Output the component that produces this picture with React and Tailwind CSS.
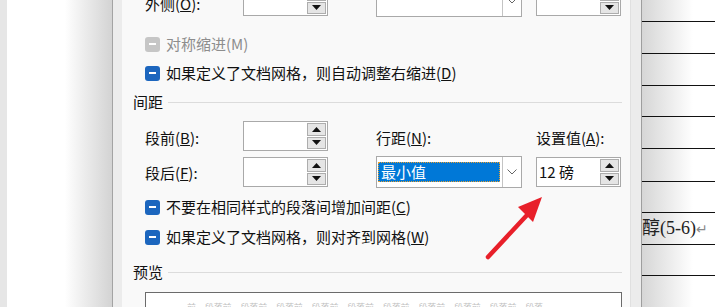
import React from 'react';

const Arrow = ({ up }) => (
  <svg width="9" height="5" viewBox="0 0 9 5">
    {up ? <polygon points="0,5 9,5 4.5,0" fill="#111" /> : <polygon points="0,0 9,0 4.5,5" fill="#111" />}
  </svg>
);

const SpinBox = ({ value, className = '' }) => (
  <div className={`flex h-[30px] w-[85px] border border-[#a9a9a9] bg-white ${className}`}>
    <div className="flex flex-1 items-center pl-[2px] text-[15px] leading-[20px] text-[#111]">{value}</div>
    <div className="flex w-[20px] flex-col gap-[1px] py-[1px] pr-[1px]">
      <div className="flex flex-1 items-center justify-center border border-[#adadad] bg-[#e5e5e5]">
        <Arrow up />
      </div>
      <div className="flex flex-1 items-center justify-center border border-[#adadad] bg-[#e5e5e5]">
        <Arrow />
      </div>
    </div>
  </div>
);

const Chevron = () => (
  <svg width="10" height="6" viewBox="0 0 10 6">
    <polyline points="0.5,0.5 5,5 9.5,0.5" fill="none" stroke="#666" strokeWidth="1" />
  </svg>
);

const Combo = ({ selected, className = '' }) => (
  <div className={`flex w-[146px] border border-[#a9a9a9] bg-white ${className}`}>
    <div className="flex flex-1 items-center pl-[1px] pr-[2px]">
      {selected && (
        <div className="flex h-[20px] flex-1 items-center border border-dotted border-[#e8a030] bg-[#0078d7] pl-[2px] text-[15px] leading-[20px] text-white">
          {selected}
        </div>
      )}
    </div>
    <div className="flex w-[19px] items-center justify-center border-l border-[#c4c4c4] bg-white">
      <Chevron />
    </div>
  </div>
);

const Check = ({ disabled, children }) => (
  <div className="flex h-[20px] items-center pl-[23px]">
    <div
      className={`flex h-[15px] w-[15px] items-center justify-center rounded-[3px] ${
        disabled ? 'bg-[#c6c6c6]' : 'bg-[#1c66be]'
      }`}
    >
      <div className="h-[2px] w-[7px] bg-white" />
    </div>
    <span className={`ml-[6px] text-[15px] leading-[20px] ${disabled ? 'text-[#8d8d8d]' : 'text-[#111]'}`}>
      {children}
    </span>
  </div>
);

const Group = ({ title, className = '' }) => (
  <div className={`flex h-[20px] items-center pl-[11px] pr-[8px] ${className}`}>
    <span className="text-[15px] leading-[20px] text-[#111]">{title}</span>
    <div className="ml-[5px] h-[1px] flex-1 bg-[#dcdcdc]" />
  </div>
);

const docRows = [33, 32, 32, 32, 33, 32, 32, 32, 32];

export default function App() {
  return (
    <div className="relative flex h-[307px] w-[715px] overflow-hidden bg-[#e6e6e6] font-['Noto_Sans_CJK_SC',sans-serif]">
      <div className="w-[7px] bg-[#e6e6e6]" />
      <div className="w-[105px] bg-linear-to-r from-white from-55% to-[#d3d3d3]" />
      <div className="w-[1px] bg-[#a3a3a3]" />
      <div className="w-[9px] bg-[#ececec]" />

      {/* dialog content */}
      <div className="flex w-[509px] flex-col border-r border-[#e0e0e0] bg-[#f9f9f9]">
        <div className="mt-[-14px] flex h-[30px] items-center">
          <div className="w-[121px] pl-[23px] pt-[6px] text-[15px] leading-[20px] text-[#111]">
            外侧(<u>O</u>):
          </div>
          <SpinBox />
          <Combo className="ml-[48px] h-[31px]" />
          <SpinBox className="ml-[14px]" />
        </div>

        <div className="mt-[18px]">
          <Check disabled>对称缩进(M)</Check>
        </div>
        <div className="mt-[9px]">
          <Check>如果定义了文档网格，则自动调整右缩进(<u>D</u>)</Check>
        </div>

        <Group title="间距" className="mt-[9px]" />

        <div className="mt-[9px] flex h-[30px] items-center">
          <div className="w-[121px] pl-[23px] pt-[3px] text-[15px] leading-[20px] text-[#111]">
            段前(<u>B</u>):
          </div>
          <SpinBox />
          <div className="ml-[48px] w-[146px] pt-[3px] text-[15px] leading-[20px] text-[#111]">
            行距(<u>N</u>):
          </div>
          <div className="ml-[14px] pt-[3px] text-[15px] leading-[20px] text-[#111]">
            设置值(<u>A</u>):
          </div>
        </div>

        <div className="mt-[6px] flex h-[30px] items-center">
          <div className="w-[121px] pl-[23px] pt-[2px] text-[15px] leading-[20px] text-[#111]">
            段后(<u>F</u>):
          </div>
          <SpinBox />
          <Combo selected="最小值" className="ml-[48px] h-[32px]" />
          <SpinBox value="12 磅" className="ml-[14px]" />
        </div>

        <div className="mt-[10px]">
          <Check>不要在相同样式的段落间增加间距(<u>C</u>)</Check>
        </div>
        <div className="mt-[10px]">
          <Check>如果定义了文档网格，则对齐到网格(<u>W</u>)</Check>
        </div>

        <Group title="预览" className="mt-[15px]" />

        <div className="ml-[23px] mt-[10px] h-[40px] w-[477px] border border-[#6b6b6b] bg-white pl-[41px] pt-[9px]">
          <div className="text-[9px] leading-[12px] tracking-[-0.1px] text-[#c0c0c0]">
            前一段落前一段落前一段落前一段落前一段落前一段落前一段落前一段落前一段落前一段落
          </div>
        </div>
      </div>

      <div className="w-[10px] bg-[#ececec]" />

      {/* document page on the right */}
      <div className="flex w-[74px] flex-col border-l border-[#9e9e9e] bg-linear-to-r from-[#d6d6d6] to-white to-70%">
        <div className="h-[21px]" />
        {docRows.map((h, i) => (
          <div
            key={i}
            className={`flex items-center border-t border-[#111] ${h === 33 ? 'h-[33px]' : 'h-[32px]'}`}
          >
            {i === 6 && (
              <span className="font-['Liberation_Serif','Noto_Sans_CJK_SC',serif] text-[18px] leading-[20px] text-[#222]">
                醇(5-6)<span className="text-[14px] text-[#8a8a8a]">↵</span>
              </span>
            )}
          </div>
        ))}
      </div>

      {/* red annotation arrow */}
      <svg className="pointer-events-none absolute left-0 top-0" width="715" height="307" viewBox="0 0 715 307">
        <line x1="488" y1="257" x2="528" y2="214" stroke="#e8202a" strokeWidth="4.5" strokeLinecap="round" />
        <polygon points="542,197 518,207 533,222" fill="#e8202a" />
      </svg>
    </div>
  );
}
